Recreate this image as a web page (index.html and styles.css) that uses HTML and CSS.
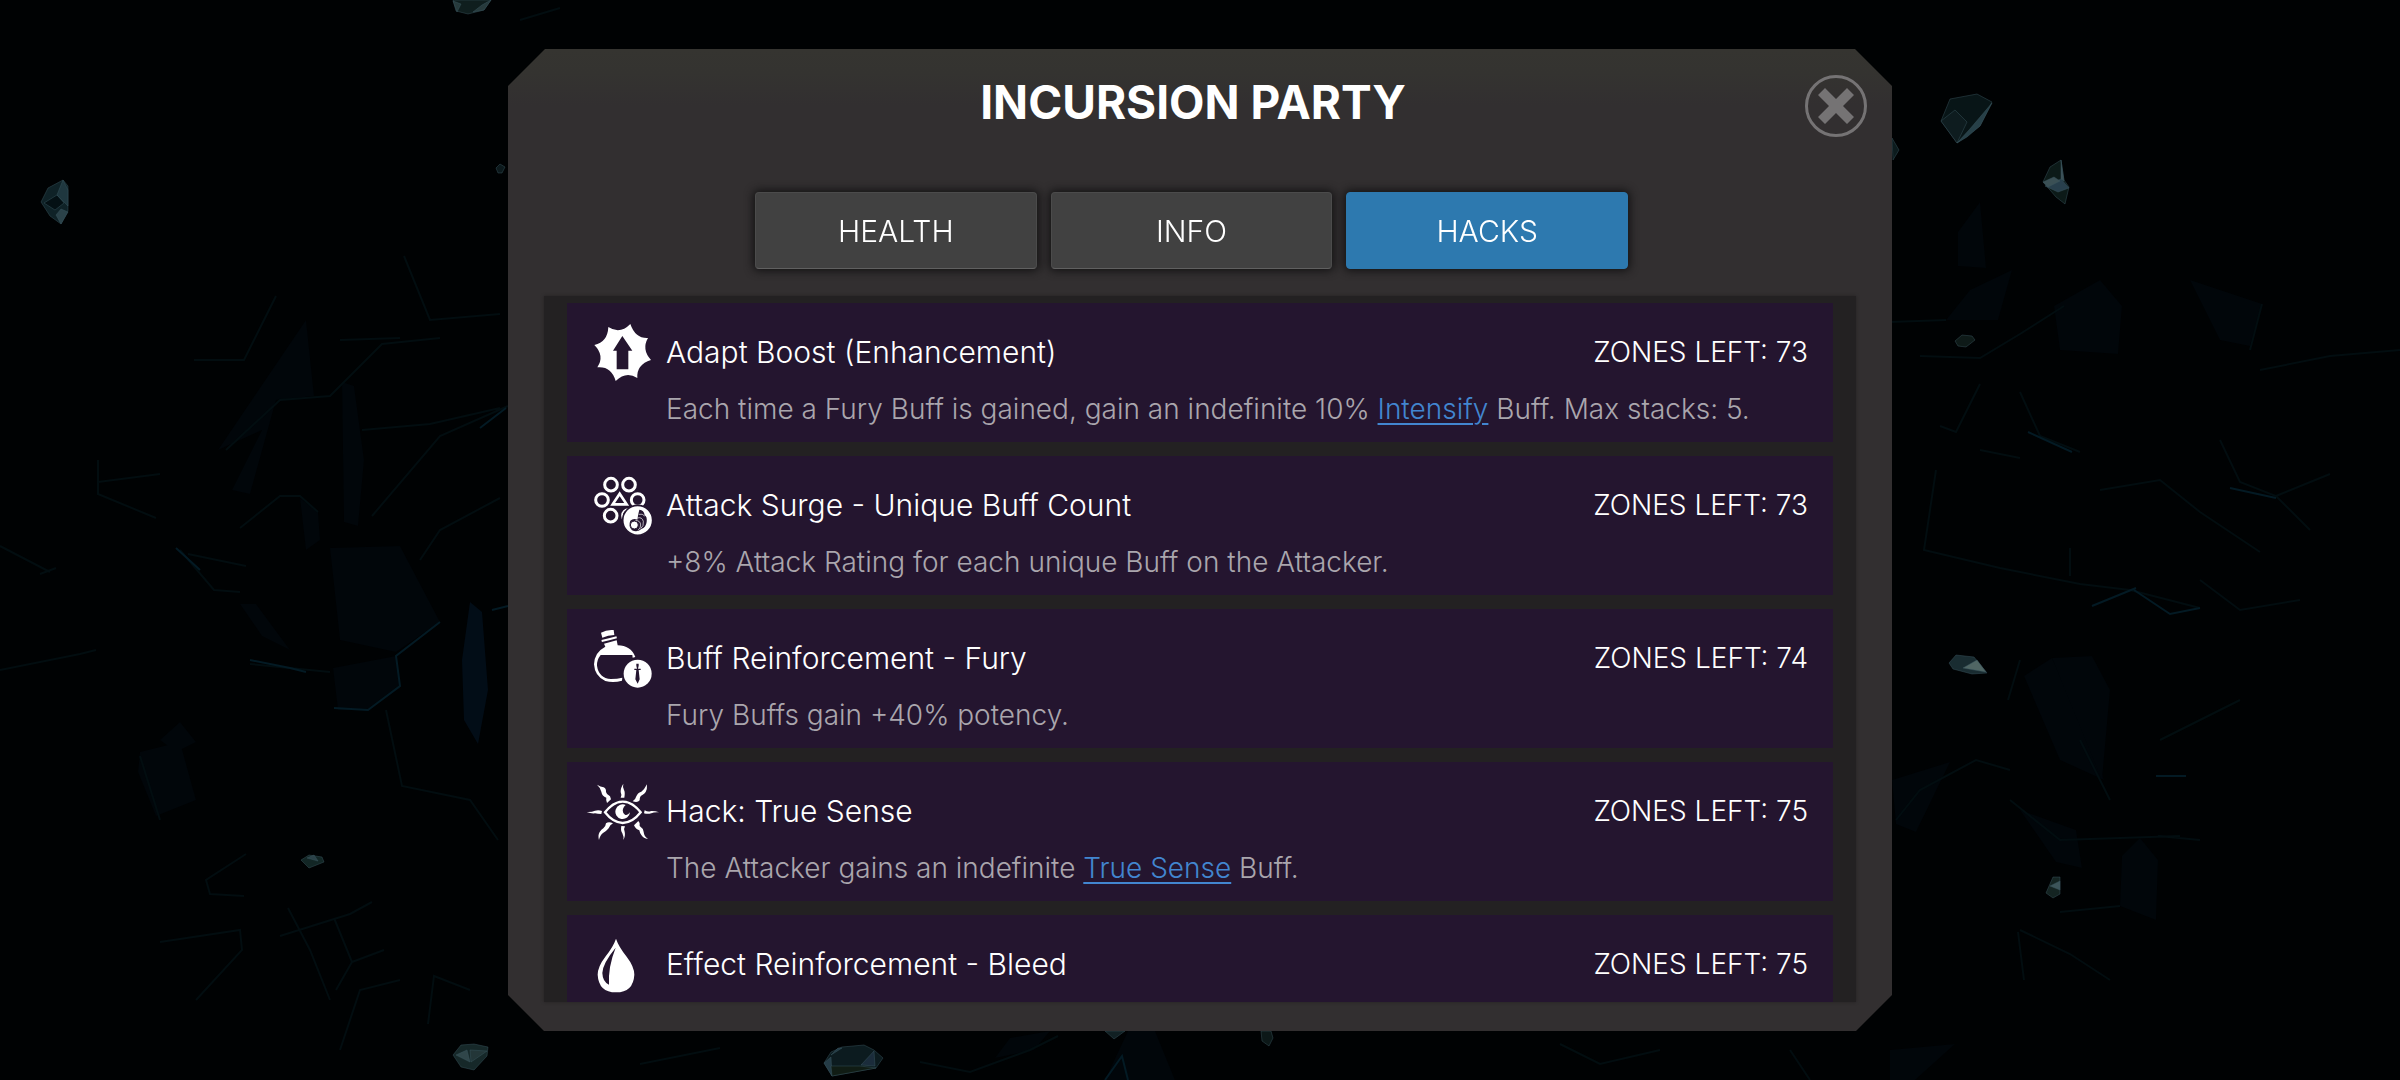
FILE: index.html
```html
<!DOCTYPE html>
<html lang="en">
<head>
<meta charset="utf-8">
<title>Incursion Party</title>
<link rel="stylesheet" href="styles.css">
</head>
<body>
<svg class="cave" viewBox="0 0 2400 1080" preserveAspectRatio="xMidYMid slice" aria-hidden="true">
  <g fill="#01060a">
    <path d="M306 320L314 396L276 400L250 494L232 490L262 430L218 450Z"/>
    <path d="M342 382L354 386L364 460L358 526L344 522Z"/>
    <path d="M240 604L256 604L290 650L262 636Z"/>
    <path d="M330 548L400 546L440 622L396 652L340 640Z"/>
    <path d="M333 668L396 656L400 688L368 710L338 710Z"/>
    <path d="M300 498L318 512L320 540L306 550Z"/>
    <path d="M138 772L156 816L196 800L180 742L140 752Z"/>
    <path d="M160 740L180 722L196 742L176 752Z"/>
    <path d="M1958 232L1980 202L1986 268L1958 266Z"/>
    <path d="M1946 320L1970 290L2012 270L1998 320Z"/>
    <path d="M2024 676L2052 658L2090 740L2104 780L2060 760Z"/>
    <path d="M2052 658L2092 656L2110 690L2102 780Z"/>
    <path d="M2054 306L2100 280L2122 306L2118 354L2060 350Z"/>
    <path d="M2190 280L2262 304L2250 346L2220 340Z"/>
    <path d="M2122 856L2140 838L2158 860L2156 920L2120 906Z"/>
    <path d="M1892 780L1950 762L1916 832L1896 824Z"/>
    <path d="M1890 1050L1955 1044L1915 1080L1890 1080Z"/>
    <path d="M2020 810L2076 830L2082 868L2056 862Z"/>
    <path d="M1128 1031L1155 1031L1175 1080L1105 1080Z"/>
    <path d="M1010 1038L1050 1031L1034 1050L995 1058Z"/>
  </g>
  <path fill="#020d17" d="M470 602L482 612L488 690L478 744L464 720L462 660Z"/>
  <g fill="none" stroke="#020d10" stroke-width="2">
    <path d="M194 360L244 360L276 296M226 450L280 400L330 396L382 344L440 338M362 430L430 424L500 408M372 516L440 436L508 406"/>
    <path d="M240 528L280 496L300 496L318 512M188 554L246 566M180 550L214 590L240 592M0 546L50 572M40 574L56 568"/>
    <path d="M98 460L98 494L156 518M98 482L160 474M340 340L400 338M404 256L430 320L500 314M0 670L80 654L96 650"/>
    <path d="M140 756L160 820M280 936L350 914L372 902M288 908L310 950L330 1000M334 918L352 962L336 990M352 962L384 950"/>
    <path d="M246 854L206 880L210 894L244 896M160 942L240 930L242 950L196 1000M428 1024L434 976L470 990M340 1050L360 990L400 980"/>
    <path d="M386 710L402 786L470 800L498 840M250 664L330 672M500 498L440 530L420 560"/>
    <path d="M1890 322L1946 320M1920 356L1980 358L2020 334L2064 306M1980 384L1956 432L1940 426"/>
    <path d="M1936 470L1924 550L2000 568L2080 584L2130 590L2200 608"/>
    <path d="M2020 392L2040 436L2080 452M1980 450L2020 458M2100 490L2160 480L2200 512L2260 552"/>
    <path d="M2220 440L2240 482L2276 496L2310 530M2276 496L2330 474M2070 548L2070 576"/>
    <path d="M2010 800L2060 840L2180 836M2158 836L2200 840M2020 930L2070 954L2110 980M2018 932L2024 980"/>
    <path d="M2120 906L2060 912M2020 660L2008 700M2080 740L2110 800M1896 820L1920 790L1976 760L2010 770"/>
    <path d="M2262 304L2250 350M2260 370L2330 356L2400 350M2200 580L2240 610L2300 600M2160 740L2240 700"/>
    <path d="M520 20L560 8M640 1064L720 1048M920 1062L970 1072L1030 1050L1058 1036M1560 1044L1600 1064L1660 1050M1790 1050L1810 1080"/>
  </g>
  <g fill="none" stroke="#031a24" stroke-width="2">
    <path d="M334 708L368 710L400 686L396 656L440 622M250 660L290 668L306 672M176 548L200 570M2230 488L2276 498"/>
    <path d="M2134 590L2170 614L2200 608M2028 432L2072 452M2092 606L2136 588"/>
    <path d="M480 428L506 408M2156 776L2186 776M492 610L508 606M1105 1080L1122 1056L1128 1080"/>
  </g>
  <g stroke="#4a6d77" stroke-width="1" stroke-opacity=".45" opacity=".8">
    <path fill="#132b31" d="M41 202L48 188L63 180L68 186L68 211L61 224L50 216Z"/>
    <path fill="#05151a" d="M44 203L57 195L64 203L55 210Z"/>
    <path fill="#27454f" d="M57 195L63 180L68 190L68 206Z"/>
    <path fill="#36535c" d="M56 215L61 209L68 212L61 224Z"/>
    <path fill="#132626" d="M453 0L456 11L468 14L484 10L491 0Z"/>
    <path fill="#31494c" d="M453 1L461 4L457 12ZM473 12L482 5L491 0L484 10Z"/>
    <path fill="#0f2023" d="M496 168L500 164L505 167L502 173L498 173Z"/>
    <path fill="#17302f" d="M301 860L309 855L322 857L324 862L309 868Z"/>
    <path fill="#36525a" d="M307 858L314 855L318 861Z"/>
    <path fill="#1c3334" d="M453 1055L461 1045L474 1044L488 1047L487 1056L474 1070L461 1067Z"/>
    <path fill="#3d585d" d="M456 1055L467 1050L470 1062Z"/>
    <path fill="#2c4447" d="M470 1050L487 1051L471 1062Z"/>
    <path fill="#0b1b1d" d="M1941 121L1950 99L1977 94L1992 102L1980 126L1957 143Z"/>
    <path fill="#122327" d="M1941 121L1955 110L1967 122L1957 143Z"/>
    <path fill="#31505a" d="M1957 143L1969 130L1992 103L1980 126L1967 137Z"/>
    <path fill="#10211f" d="M2043 182L2050 167L2061 160L2064 180L2069 187L2065 204L2056 197Z"/>
    <path fill="#334f5f" d="M2045 186L2061 179L2069 188L2058 192Z"/>
    <path fill="#4a646b" d="M2043 182L2054 177L2060 181L2048 187ZM2061 160L2064 181L2061 179Z"/>
    <path fill="#12211e" d="M1955 341L1962 335L1972 336L1975 340L1966 347L1958 346Z"/>
    <path fill="#20373e" d="M1949 663L1956 655L1974 657L1987 673L1972 674L1953 669Z"/>
    <path fill="#64807e" d="M1963 668L1977 660L1986 672Z"/>
    <path fill="#1a2d2b" d="M2046 893L2053 877L2060 877L2060 894L2053 898Z"/>
    <path fill="#4b6970" d="M2050 886L2060 881L2060 890Z"/>
    <path fill="#0f2227" d="M824 1063L831 1052L842 1047L864 1045L874 1050L883 1058L876 1068L832 1076Z"/>
    <path fill="#2d4a58" d="M824 1063L831 1057L832 1076ZM831 1055L838 1048L842 1048Z"/>
    <path fill="#14241a" d="M831 1066L860 1066L876 1068L832 1076Z"/>
    <path fill="#22384a" d="M861 1065L874 1051L875 1066Z"/>
    <path fill="#16282c" d="M1105 1031L1114 1039L1125 1031Z"/>
    <path fill="#101f1e" d="M1261 1031L1262 1041L1269 1046L1273 1038L1271 1031Z"/>
    <path fill="#0f2225" d="M1892 138L1899 150L1893 160Z"/>
  </g>
</svg>

<main class="screen">
  <section class="panel" role="dialog" aria-labelledby="party-title">
    <header class="panel-header">
      <h1 class="panel-title" id="party-title">INCURSION PARTY</h1>
      <button class="close" type="button" aria-label="Close">
        <svg viewBox="0 0 62 62" width="62" height="62" aria-hidden="true">
          <circle cx="31" cy="31" r="29.5" fill="none" stroke="#757374" stroke-width="3"/>
          <path fill="#757374" d="M20 13L31 24L42 13L49 20L38 31L49 42L42 49L31 38L20 49L13 42L24 31L13 20Z"/>
        </svg>
      </button>
    </header>

    <nav class="tabs" aria-label="Party sections">
      <button class="tab" type="button">HEALTH</button>
      <button class="tab" type="button">INFO</button>
      <button class="tab tab-active" type="button" aria-current="true">HACKS</button>
    </nav>

    <ul class="hacks">
      <li class="hack">
        <svg class="hack-icon" viewBox="15 27 228 192" aria-hidden="true">
          <path fill="#fff" fill-rule="evenodd" d="M151 42Q166 86 204 84Q184 118 213 150Q169 164 172 204Q138 182 107 213Q94 168 52 172Q75 137 43 105Q83 96 85 51Q120 74 151 42ZM127 78L99 122H110V178H145V122H157Z"/>
        </svg>
        <div class="hack-text">
          <div class="hack-head">
            <h2 class="hack-name">Adapt Boost (Enhancement)</h2>
            <span class="zones">ZONES LEFT: 73</span>
          </div>
          <p class="hack-info">Each time a Fury Buff is gained, gain an indefinite 10% <a class="term" href="#intensify">Intensify</a> Buff. Max stacks: 5.</p>
        </div>
      </li>
      <li class="hack">
        <svg class="hack-icon" viewBox="15 486 228 192" aria-hidden="true">
          <g fill="none" stroke="#fff" stroke-width="9">
            <circle cx="93" cy="524" r="19"/>
            <circle cx="147" cy="524" r="19"/>
            <circle cx="66" cy="570" r="19"/>
            <circle cx="173" cy="570" r="19"/>
            <circle cx="92" cy="617" r="19"/>
            <circle cx="146" cy="617" r="20" stroke-width="5"/>
            <path stroke-width="8" d="M119 551L98 583H140Z"/>
          </g>
          <circle cx="173" cy="631" r="45" fill="#fff" stroke="#24152f" stroke-width="5"/>
          <path fill="#24152f" d="M178 599Q192 600 194 616Q202 620 200 636Q198 652 184 657Q172 668 156 661Q144 648 151 632Q160 624 172 629Q174 614 178 599Z"/>
          <path fill="none" stroke="#fff" stroke-width="2" d="M176 613Q188 610 194 618M172 624Q186 620 190 634Q192 648 182 656M166 631Q182 632 182 645Q182 654 174 661"/>
          <circle cx="163" cy="645" r="12" fill="#fff" stroke="#24152f" stroke-width="3"/>
        </svg>
        <div class="hack-text">
          <div class="hack-head">
            <h2 class="hack-name">Attack Surge - Unique Buff Count</h2>
            <span class="zones">ZONES LEFT: 73</span>
          </div>
          <p class="hack-info">+8% Attack Rating for each unique Buff on the Attacker.</p>
        </div>
      </li>
      <li class="hack">
        <svg class="hack-icon" viewBox="15 45 228 192" aria-hidden="true">
          <path fill="#fff" d="M63 68Q80 58 101 60L103 75Q84 75 67 83ZM72 101L110 91L113 106Q152 106 166 141L158 143L157 135H62Q50 150 51 167Q56 204 93 207Q112 207 127 203L126 212Q100 220 76 213Q44 199 42 163Q43 127 76 110Z"/>
          <path fill="none" stroke="#fff" stroke-width="6" d="M65 93Q87 88 110 82"/>
          <circle cx="173" cy="191" r="42" fill="#fff"/>
          <path fill="#24152f" d="M169 161H176V167L174 176H182V180H176L179 208L173 221L166 208L169 180H163V176H171L169 167Z"/>
        </svg>
        <div class="hack-text">
          <div class="hack-head">
            <h2 class="hack-name">Buff Reinforcement - Fury</h2>
            <span class="zones">ZONES LEFT: 74</span>
          </div>
          <p class="hack-info">Fury Buffs gain +40% potency.</p>
        </div>
      </li>
      <li class="hack">
        <svg class="hack-icon" viewBox="15 24 228 192" aria-hidden="true">
          <path fill="none" stroke="#fff" stroke-width="7" d="M75 127Q100 95 128 95Q157 95 182 127Q157 159 128 159Q100 159 75 127Z"/>
          <path fill="#fff" d="M137 105A22 22 0 1 0 150 127Q143 137 135 134Q126 129 129 117Q131 109 137 105Z"/>
          <g fill="#fff">
            <path d="M51 44Q62 50 71 52Q79 56 78 66Q79 73 90 79L93 88L81 99Q77 91 79 83Q66 78 64 65Q62 54 51 44Z"/>
            <path d="M130 41Q127 52 132 60Q136 67 133 83L122 83Q126 73 122 66Q121 55 130 41Z"/>
            <path d="M201 43Q202 58 197 66Q193 72 187 75Q179 78 179 91Q173 99 158 94Q167 88 169 79Q172 69 184 65Q193 59 201 43Z"/>
            <path d="M20 126Q35 127 45 122Q56 119 66 123L64 132Q53 132 45 130Q32 131 20 126Z"/>
            <path d="M237 127Q222 126 214 130Q203 133 192 130L194 121Q205 127 213 123Q224 122 237 127Z"/>
            <path d="M57 210Q53 195 59 186Q64 178 70 175Q77 170 78 160Q86 153 99 160Q90 164 86 175Q79 184 70 188Q60 195 57 210Z"/>
            <path d="M130 210Q132 200 127 190Q121 182 124 168L135 169Q130 177 134 185Q137 196 130 210Z"/>
            <path d="M204 207Q190 205 184 195Q179 188 178 181Q167 178 162 166L175 153Q181 158 179 168Q189 174 191 186Q192 199 204 207Z"/>
          </g>
        </svg>
        <div class="hack-text">
          <div class="hack-head">
            <h2 class="hack-name">Hack: True Sense</h2>
            <span class="zones">ZONES LEFT: 75</span>
          </div>
          <p class="hack-info">The Attacker gains an indefinite <a class="term" href="#true-sense">True Sense</a> Buff.</p>
        </div>
      </li>
      <li class="hack">
        <svg class="hack-icon" viewBox="15 483 228 192" aria-hidden="true">
          <path fill="#fff" fill-rule="evenodd" d="M108 506Q116 530 140 560Q163 590 163 614Q160 667 108 667Q56 667 53 614Q53 590 76 560Q100 530 108 506ZM107 533Q68 580 67 609Q68 636 87 644Q84 590 107 533Z"/>
        </svg>
        <div class="hack-text">
          <div class="hack-head">
            <h2 class="hack-name">Effect Reinforcement - Bleed</h2>
            <span class="zones">ZONES LEFT: 75</span>
          </div>
        </div>
      </li>
    </ul>
  </section>
</main>
</body>
</html>
```
FILE: styles.css
```css
* {
  box-sizing: border-box;
}

body {
  margin: 0;
  background: #000203;
  color: #fff;
  font-family: Inter, "Liberation Sans", sans-serif;
}

.cave {
  position: fixed;
  inset: 0;
  width: 100%;
  height: 100%;
}

/* The dialog takes the middle column, with the cave showing on both sides. */
.screen {
  position: relative;
  display: grid;
  grid-template-columns: 508fr 1384fr 508fr;
  height: 100vh;
  padding: 49px 0;
}

.panel {
  grid-column: 2;
  display: flex;
  flex-direction: column;
  min-height: 0;
  padding: 26px 0 29px;
  background: linear-gradient(#353430, #343330 24px, #322f30 56px, #322f30);
  clip-path: polygon(37px 0, calc(100% - 37px) 0, 100% 37px, 100% calc(100% - 36px), calc(100% - 36px) 100%, 36px 100%, 0 calc(100% - 36px), 0 37px);
}

.panel-header {
  display: grid;
  grid-template-columns: 62px 1fr 62px;
  align-items: center;
  padding: 0 25px 0 11px;
}

.panel-title {
  grid-column: 2;
  margin: 0;
  padding-bottom: 8px;
  font-size: 46px;
  font-weight: 700;
  line-height: 54px;
  text-align: center;
}

.close {
  width: 62px;
  height: 62px;
  padding: 0;
  border: 0;
  background: none;
  cursor: pointer;
}

.close svg {
  display: block;
}

.tabs {
  display: grid;
  grid-template-columns: repeat(3, 1fr);
  gap: 14px;
  margin: 55px 264px 27px 247px;
}

.tab {
  height: 77px;
  padding: 0;
  border: 1px solid #4b4b4b;
  border-bottom-color: #606060;
  border-radius: 4px;
  background: #414141;
  box-shadow: 0 0 8px 2px #141314;
  color: #fff;
  font: 300 30px/40px Inter, "Liberation Sans", sans-serif;
  cursor: pointer;
}

.tab-active {
  border-color: #2d79af;
  background: #2d79af;
}

.hacks {
  flex: 1;
  display: flex;
  flex-direction: column;
  gap: 14px;
  min-height: 0;
  margin: 0 36px;
  padding: 7px 23px 0;
  overflow-y: auto;
  scrollbar-width: none;
  background: #232122;
  box-shadow: 0 0 3px #232122;
  list-style: none;
}

.hack {
  display: flex;
  flex: none;
  gap: 5px;
  height: 139px;
  padding: 16px 25px 0 18px;
  background: #24152f;
}

.hack-icon {
  flex: none;
  width: 76px;
  height: 64px;
}

.hack-text {
  flex: 1;
  padding-top: 13px;
}

.hack-head {
  display: flex;
  justify-content: space-between;
}

.hack-name,
.zones {
  margin: 0;
  font-size: 30px;
  font-weight: 300;
  line-height: 40px;
}

.zones {
  font-size: 28px;
}

.hack-info {
  margin: 17px 0 0;
  color: #aaa6ad;
  font-size: 28px;
  font-weight: 300;
  line-height: 40px;
}

.term {
  color: #4286d0;
  text-decoration-thickness: 2px;
  text-underline-offset: 4px;
}
```
